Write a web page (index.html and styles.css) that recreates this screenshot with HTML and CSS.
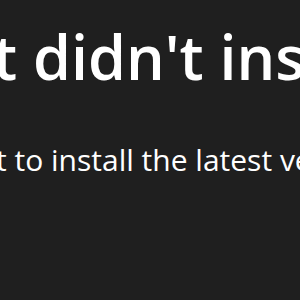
FILE: index.html
```html
<!DOCTYPE html>
<html lang="en">
<head>
    <meta charset="UTF-8">
    <meta name="viewport" content="width=device-width, initial-scale=1.0">
    <title>Install error</title>
    <link rel="stylesheet" href="styles.css">
</head>
<body>
    <div class="message">
        <h1 class="title">t didn't install</h1>
        <p class="detail">t to install the latest version</p>
    </div>
</body>
</html>
```

FILE: styles.css
```css
html, body {
    margin: 0;
    padding: 0;
    height: 100%;
    background: #1f1f1f;
    overflow: hidden;
}
body {
    font-family: "Open Sans", "Noto Sans", sans-serif;
    color: #fff;
}
.message {
    padding-top: 17px;
    white-space: nowrap;
}
.title {
    margin: 0 0 0 -7px;
    font-size: 61px;
    font-weight: 600;
    line-height: 80px;
}
.detail {
    margin: 43px 0 0 -4px;
    font-size: 30px;
    font-weight: 400;
    line-height: 40px;
}
```
